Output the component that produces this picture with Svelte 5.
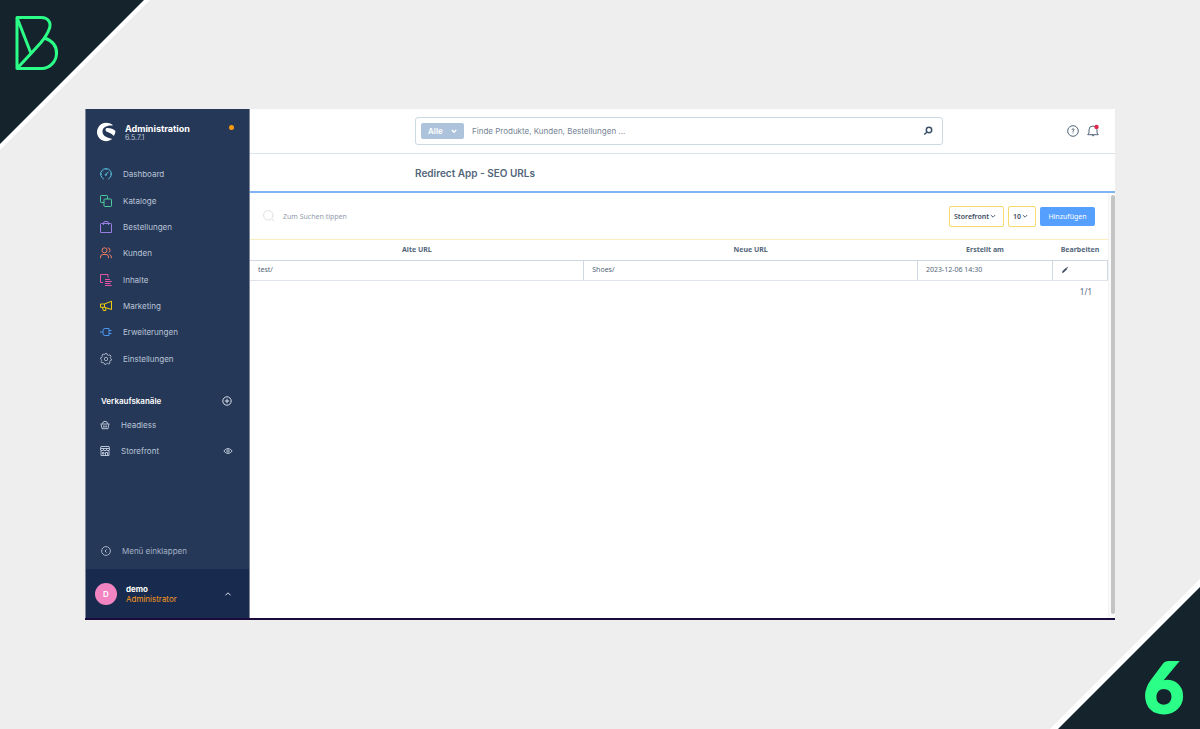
<script>
  const nav = [
    { label: 'Dashboard', icon: 'dashboard', color: '#55c3dc' },
    { label: 'Kataloge', icon: 'catalog', color: '#4bcb9b' },
    { label: 'Bestellungen', icon: 'orders', color: '#9a7fe0' },
    { label: 'Kunden', icon: 'customers', color: '#ee7f60' },
    { label: 'Inhalte', icon: 'content', color: '#e455a8' },
    { label: 'Marketing', icon: 'marketing', color: '#f2cf0d' },
    { label: 'Erweiterungen', icon: 'extensions', color: '#4a96f0' },
    { label: 'Einstellungen', icon: 'settings', color: '#a5b1c2' }
  ];
  const rows = [{ from: 'test/', to: 'Shoes/', created: '2023-12-06 14:30' }];
  let globalTerm = $state('');
  let term = $state('');
  let channel = $state('Storefront');
  let limit = $state('10');
</script>

{#snippet chevron()}
  <svg class="chev" viewBox="0 0 6 6" aria-hidden="true"><path d="M.8 2L3 4.200 5.200 2" /></svg>
{/snippet}

<div class="page">
  <div class="corner top">
    <svg class="logo-b" viewBox="0 0 44 55" aria-hidden="true">
      <path d="M2 1.500H26C34.500 1.500 36.500 8 34 13.500Q32 19 26 26.500L16 37.500 2 52.500ZM2 1.500L16 37.500M29.500 22C38 25 42 31 41.500 38C41 46.500 34 52.500 27 52.500H2" />
    </svg>
  </div>

  <div class="app">
    <aside>
      <header class="brand">
        <svg class="shop" viewBox="0 0 20 20" aria-hidden="true">
          <path d="M16.700 3C14.900 1.600 12.600.8 10.100.8A9.200 9.200 0 1 0 15.800 17.300C16 17.100 15.900 16.900 15.700 16.800C12.800 15.800 6.500 14.700 6.500 9.700C6.500 5.500 10 3.200 16.500 3.500C16.900 3.500 16.900 3.200 16.700 3Z" />
          <path d="M19.200 8.700C17.800 7.200 14.600 6 11.500 6C9.400 6 8.900 8.200 10.500 9.500C12.200 10.900 15.500 11 17.300 13.400C17.500 13.700 17.800 13.700 18 13.400C18.900 12 19.400 10.500 19.400 9.200Q19.400 8.900 19.200 8.700Z" />
        </svg>
        <div class="brand-text"><strong>Administration</strong><small>6.5.7.1</small></div>
        <span class="status"></span>
      </header>

      <nav>
        {#each nav as item}
          <a href="#{item.icon}">
            <svg class="icon" viewBox="0 0 12 12" style:color={item.color} aria-hidden="true">
              {#if item.icon === 'dashboard'}
                <path d="M3.500 10.800A5.400 5.400 0 1 1 8.500 10.800H8M3.500 10.800H4M6 1v1M1 6h1M10 6h1M2.500 2.700l.6.6M6 6.500L8.300 3.700" /><circle cx="5.800" cy="6.800" r=".7" />
              {:else if item.icon === 'catalog'}
                <path d="M4 7.500H1.200Q.5 7.500.5 6.800V1.200Q.5.5 1.200.5H6.800Q7.500.5 7.500 1.200V4" /><rect x="4" y="4" width="7.500" height="7.500" rx=".7" />
              {:else if item.icon === 'orders'}
                <path d="M1.200 2.500H10.800Q11.500 2.500 11.500 3.200V11.500H.5V3.200Q.5 2.500 1.200 2.500ZM3.500 4V2.200Q3.500.5 5 .5H7Q8.500.5 8.500 2.200V4" />
              {:else if item.icon === 'customers'}
                <circle cx="4.500" cy="3.300" r="2.500" /><path d="M.5 11.200V10Q.5 7.500 3 7.500H6Q8.500 7.500 8.500 10V11.200M7.800.8A2.500 2.500 0 0 1 8.500 5.600M9.500 7.500Q11.500 8 11.500 11.200" />
              {:else if item.icon === 'content'}
                <path d="M3 8.500H.5V.5H8V3.500M5 5.500H10M5 7.500H11.800M5 9.500H10.500M5 11.500H11.800" />
              {:else if item.icon === 'marketing'}
                <path d="M.5 4H4.500L11.500 1.200V9.500L4.500 7.300H.5ZM4.500 4V7.300M2.500 7.300L3.300 10.500H5.800V7.800" />
              {:else if item.icon === 'extensions'}
                <path d="M0 6H3M5 2.500H9V9.500H5Q3 9.500 3 7.500V4.500Q3 2.500 5 2.500ZM9 4.500H11.500M9 7.500H11.500" />
              {:else}
                <path d="M5 .6H7L7.400 2 8.600 2.500 9.900 1.800 11 3.200 10.200 4.500 10.400 5.300 11.500 6 11.200 7.500 9.900 7.800 9.500 8.700 10.100 10 8.800 11 7.500 10.200 6.800 10.400 6 11.500 4.500 11.200 4.200 10 3.300 9.500 2 10 1 8.700 1.700 7.500 1.500 6.700.5 6 .8 4.600 2 4.200 2.500 3.300 1.900 2 3.200 1.100 4.500 1.800Z" /><circle cx="6" cy="6" r="1.700" />
              {/if}
            </svg>
            {item.label}
          </a>
        {/each}
      </nav>

      <section class="channels">
        <h2>Verkaufskanäle
          <button aria-label="Verkaufskanal hinzufügen"><svg viewBox="0 0 10 10"><circle cx="5" cy="5" r="4.200" /><path d="M5 2.800V7.200M2.800 5H7.200" /></svg></button>
        </h2>
        <a href="#headless">
          <svg viewBox="0 0 10 10" aria-hidden="true"><path d="M.5 4H9.500M1.200 4.200L2 8.700H8L8.800 4.200M2.500 3.800Q2.500 1.300 5 1.300T7.500 3.800M3.700 5.500V7.500M5 5.500V7.500M6.300 5.500V7.500" /></svg>
          Headless
        </a>
        <a href="#storefront">
          <svg viewBox="0 0 10 10" aria-hidden="true"><path d="M1 4.500V9.500H9V4.500M.5 4V2.500L1 .5H9L9.500 2.500V4Q8 5.500 6.500 4Q5 5.500 3.500 4Q2 5.500.5 4ZM.5 2.500H9.500M3.500 2.500V4M6.500 2.500V4M5.500 9.500V6.500H7.500V9.500M2.500 6.500H4V8H2.500Z" /></svg>
          Storefront
          <svg class="eye" viewBox="0 0 10 10" aria-hidden="true"><path d="M.8 5Q5 0 9.200 5Q5 10 .8 5Z" /><circle cx="5" cy="5" r="1.200" /></svg>
        </a>
      </section>

      <button class="collapse">
        <svg viewBox="0 0 10 10" aria-hidden="true"><circle cx="5" cy="5" r="4.400" /><path d="M5.700 3.300L4 5 5.700 6.700" /></svg>
        Menü einklappen
      </button>
      <button class="user">
        <span class="avatar">D</span>
        <span class="who"><strong>demo</strong><em>Administrator</em></span>
        <svg class="up" viewBox="0 0 8 8" aria-hidden="true"><path d="M1.500 5.300L4 2.800 6.500 5.300" /></svg>
      </button>
    </aside>

    <main>
      <div class="topbar">
        <div class="search">
          <button class="scope">Alle {@render chevron()}</button>
          <input aria-label="Globale Suche" placeholder="Finde Produkte, Kunden, Bestellungen ..." bind:value={globalTerm} />
          <svg class="lens" viewBox="0 0 10 10" aria-hidden="true"><circle cx="6" cy="4" r="2.700" /><path d="M3.800 6.200L1.200 8.500" /></svg>
        </div>
        <div class="tools">
          <button aria-label="Hilfe"><svg viewBox="0 0 12 12"><circle cx="6" cy="6" r="5.300" /><path d="M5 4.900Q5 3.800 6 3.800T7 4.800Q7 5.500 6 5.900V6.800M6 7.600V8.400" /></svg></button>
          <button aria-label="Benachrichtigungen"><svg viewBox="0 0 12 12"><path d="M.7 9.700H11.300L10 8V4.800Q10 1 6 1T2 4.800V8ZM4.800 10Q6 12.300 7.200 10" /><circle class="badge" cx="9.500" cy="1.900" r="2.200" /></svg></button>
        </div>
      </div>
      <div class="titlebar"><h1>Redirect App - SEO URLs</h1></div>

      <div class="scroller">
        <div class="content">
          <div class="toolbar">
            <svg class="find" viewBox="0 0 12 12" aria-hidden="true"><circle cx="5.300" cy="5.300" r="4.700" /><path d="M8.700 8.700L11.300 11.300" /></svg>
            <input aria-label="Suchen" placeholder="Zum Suchen tippen" bind:value={term} />
            <label class="pick"><select aria-label="Verkaufskanal" bind:value={channel}><option>Storefront</option><option>Headless</option></select>{@render chevron()}</label>
            <label class="pick small"><select aria-label="Einträge pro Seite" bind:value={limit}><option>10</option><option>25</option></select>{@render chevron()}</label>
            <button class="add">Hinzufügen</button>
          </div>
          <table>
            <colgroup><col /><col /><col class="date" /><col class="edit" /></colgroup>
            <thead><tr><th>Alte URL</th><th>Neue URL</th><th>Erstellt am</th><th>Bearbeiten</th></tr></thead>
            <tbody>
              {#each rows as row}
                <tr>
                  <td>{row.from}</td><td>{row.to}</td><td>{row.created}</td>
                  <td><button aria-label="Bearbeiten"><svg viewBox="0 0 8 8"><path d="M1 7L1.400 5.300 5 1.700 6.300 3 2.700 6.600ZM5.400 1.300L6 .8 7.200 2 6.700 2.600Z" /></svg></button></td>
                </tr>
              {/each}
            </tbody>
          </table>
          <p class="pager">1/1</p>
        </div>
        <div class="track"><span></span></div>
      </div>
    </main>
  </div>

  <div class="corner bottom"><span>6</span></div>
</div>

<style>
  :global(body) { margin: 0; background: #eeeeee; }
  .page { position: relative; box-sizing: border-box; min-height: 100vh; padding: 109px 85px; display: flex; overflow: hidden; font-family: Inter, "Liberation Sans", sans-serif; color: #52667a; }
  .page * { box-sizing: border-box; }
  button, input, select { font: inherit; color: inherit; border: 0; padding: 0; margin: 0; background: none; min-width: 0; }
  input { outline: 0; }
  button { display: flex; align-items: center; cursor: pointer; }
  a { color: inherit; text-decoration: none; }
  svg { display: block; flex: none; fill: none; stroke: currentColor; stroke-width: 1; overflow: visible; }

  .corner { position: absolute; width: 150px; height: 150px; background: #ffffff; }
  .corner::before { content: ""; position: absolute; inset: 0; background: #15232c; }
  .corner.top { top: 0; left: 0; clip-path: polygon(0 0, 100% 0, 0 100%); }
  .corner.top::before { clip-path: polygon(0 0, 144px 0, 0 144px); }
  .corner.bottom { right: 0; bottom: 0; clip-path: polygon(100% 0, 100% 100%, 0 100%); }
  .corner.bottom::before { clip-path: polygon(100% 8px, 100% 100%, 8px 100%); }
  .logo-b { position: absolute; left: 15px; top: 16px; width: 44px; height: 55px; color: #2bff88; stroke-width: 3; stroke-linejoin: round; }
  .corner span { position: absolute; right: 16px; bottom: 1px; font: 900 70px/84px Lato, sans-serif; color: #2bff88; -webkit-text-stroke: 2px #2bff88; }

  .app { flex: 1; min-width: 0; display: flex; background: #ffffff; border-bottom: 2px solid #1b0a3c; }

  aside { flex: none; width: 165px; display: flex; flex-direction: column; background: #263858; color: #b9c5d6; font-size: 8px; border-left: 1px solid #7d8798; border-right: 1px solid #7d8798; }
  .brand { display: flex; align-items: flex-start; padding: 13px 15px 0 10px; height: 52px; }
  .shop { width: 20px; height: 20px; fill: #ffffff; stroke: none; }
  .brand-text { flex: 1; margin: 1px 0 0 9px; }
  .brand-text strong, .brand-text small { display: block; }
  .brand-text strong { font-size: 9px; line-height: 11px; color: #ffffff; }
  .brand-text small { font-size: 7px; line-height: 8px; }
  .status { width: 5px; height: 5px; margin-top: 3px; border-radius: 50%; background: #ff9a0c; }
  nav { display: grid; grid-auto-rows: 1fr; height: 211px; }
  nav a { display: flex; align-items: center; gap: 11px; padding-left: 14px; }
  .icon { width: 12px; height: 12px; }
  .channels { margin-top: 19px; }
  h2 { display: flex; align-items: center; justify-content: space-between; margin: 0; height: 20px; padding: 0 17px 0 15px; font-size: 8px; font-weight: 600; color: #ffffff; }
  h2 svg { width: 10px; height: 10px; color: #d8e0ea; }
  .channels a { display: flex; align-items: center; height: 26px; gap: 11px; padding: 0 16px 0 14px; }
  .channels h2 + a { margin-top: 1px; }
  .channels a svg { width: 10px; height: 10px; }
  .channels .eye { margin-left: auto; }
  .collapse { margin-top: auto; height: 36px; gap: 11px; padding-left: 15px; color: #a3b1c5; }
  .collapse svg { width: 10px; height: 10px; }
  .user { height: 49px; padding: 0 17px 0 9px; background: #182b4e; text-align: left; }
  .avatar { width: 22px; height: 22px; border-radius: 50%; background: #f284c2; color: #ffffff; font-weight: 600; line-height: 22px; text-align: center; }
  .who { flex: 1; margin-left: 9px; }
  .who strong, .who em { display: block; line-height: 10px; font-style: normal; }
  .who strong { color: #ffffff; }
  .who em { color: #f7981d; }
  .up { width: 8px; height: 8px; color: #d8e0ea; }

  main { flex: 1; min-width: 0; display: flex; flex-direction: column; }
  .topbar, .titlebar { display: grid; grid-template-columns: 1fr minmax(0, 528px) 1fr; align-items: center; padding-right: 7px; }
  .topbar { height: 45px; border-bottom: 1px solid #d9e3ec; }
  .search { grid-column: 2; display: flex; align-items: center; height: 28px; padding: 0 9px 0 5px; border: 1px solid #cbd9e3; border-radius: 3px; }
  .scope { justify-content: space-between; width: 43px; height: 16px; padding: 0 7px; border-radius: 2px; background: #adc3dc; color: #ffffff; font-size: 8px; font-weight: 600; }
  .search input { flex: 1; margin-left: 8px; font-size: 8px; }
  .search input::placeholder { color: #758494; opacity: 1; }
  .lens { width: 10px; height: 10px; color: #3c5068; }
  .tools { grid-column: 3; display: flex; justify-content: flex-end; gap: 8px; padding-right: 9px; }
  .tools svg { width: 12px; height: 12px; color: #52667a; }
  .tools .badge { fill: #e3264c; stroke: none; }
  .titlebar { height: 39px; border-bottom: 2px solid #80b5f5; }
  h1 { grid-column: 2; margin: 0; font-size: 10px; line-height: 14px; font-weight: 600; }

  .scroller { flex: 1; display: flex; font-family: "Noto Sans", "Open Sans", sans-serif; font-size: 7px; }
  .content { flex: 1; min-width: 0; }
  .toolbar { display: flex; align-items: center; height: 47px; padding-right: 13px; border-bottom: 1px solid #fbeec0; }
  .find { width: 12px; height: 12px; margin-left: 13px; color: #dcdfe4; }
  .toolbar input { flex: 1; margin-left: 8px; }
  .toolbar input::placeholder { color: #939bab; opacity: 1; }
  .pick { position: relative; width: 55px; height: 21px; margin-right: 4px; border: 1px solid #f5da6c; border-radius: 2px; }
  .pick.small { width: 28px; }
  .pick select { appearance: none; width: 100%; height: 100%; padding-left: 4px; font-weight: 600; color: #3e4c60; }
  .chev { width: 6px; height: 6px; }
  .pick .chev { position: absolute; right: 7px; top: 6px; pointer-events: none; }
  .add { justify-content: center; width: 55px; height: 19px; border-radius: 2px; background: #559fff; color: #ffffff; }
  table { width: 100%; table-layout: fixed; border-collapse: collapse; }
  .date { width: 135px; }
  .edit { width: 55px; }
  th, td { height: 20px; padding: 0 8px; line-height: 10px; white-space: nowrap; }
  th { padding: 0; font-weight: 700; text-align: center; border-bottom: 1px solid #cfd8e3; }
  td { border-bottom: 1px solid #dfe4ea; border-right: 1px solid #cfd8e3; }
  td svg { width: 8px; height: 8px; fill: #3e4c60; stroke: none; }
  .pager { margin: 6px 16px 0; font-size: 8px; line-height: 10px; text-align: right; }
  .track { width: 7px; padding: 2px 0 4px 2px; border-left: 1px solid #f3f3f3; background: #fafafa; }
  .track span { display: block; height: 100%; border-radius: 2px; background: #c4c4c4; }
  .scope .chev, .lens { stroke-width: 1.5; }
</style>
